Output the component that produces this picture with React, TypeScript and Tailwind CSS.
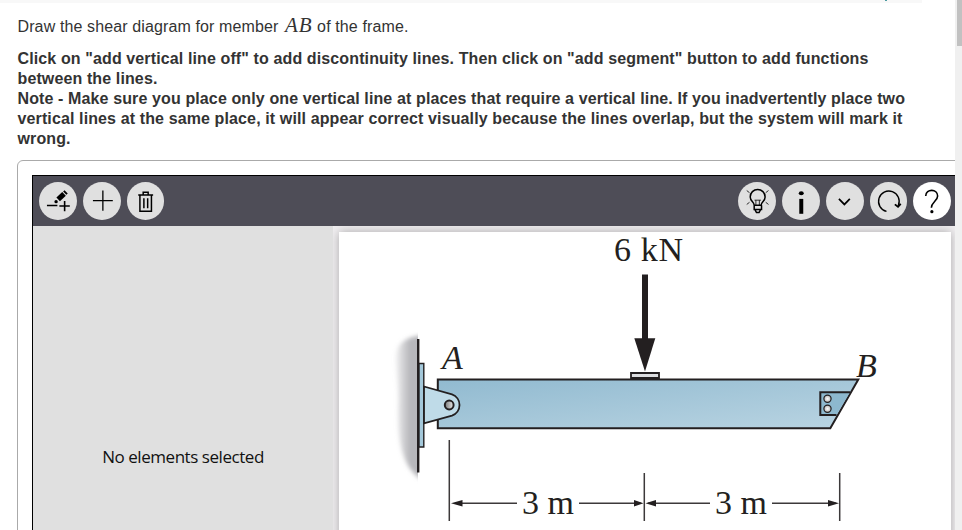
import React from 'react';

interface IRoundButtonProps {
  label: string;
  active?: boolean;
  children: React.ReactNode;
}

function RoundButton({ label, active, children }: IRoundButtonProps) {
  return (
    <button
      aria-label={label}
      className={
        active
          ? 'h-[37.75px] w-[37.75px] shrink-0 rounded-full bg-white'
          : 'h-[37.75px] w-[37.75px] shrink-0 rounded-full bg-[#e0e0e0]'
      }
    >
      <svg
        viewBox="0 0 38 38"
        className="block h-full w-full"
        fill="none"
        stroke="#000"
        strokeWidth="1.3"
      >
        {children}
      </svg>
    </button>
  );
}

function Toolbar() {
  return (
    <div className="flex h-[50px] justify-between bg-[#4e4d57] pt-[6px] pr-[4px] pl-[6px]">
      <div className="flex gap-[6px]">
        <RoundButton label="add vertical line off">
          <path d="M8 23.7h10.5M20.5 24.2h10.5M25.8 19v10.5" strokeWidth="1.6" />
          <path d="M19.3 17.6 25.2 12" strokeWidth="5.2" />
          <path d="M25.9 11.3l1.4-1.4" strokeWidth="4.6" />
          <circle cx="17.2" cy="19.8" r="1.7" fill="#000" stroke="none" />
        </RoundButton>
        <RoundButton label="add segment">
          <path d="M10 18.8h20M20 8.5v20.5" />
        </RoundButton>
        <RoundButton label="delete">
          <path
            d="M11.3 13h15M13 13v16.5h11.6V13M16.3 13v-2.6h5V13M17 16.3v10M20.8 16.3v10"
            strokeWidth="1.5"
          />
        </RoundButton>
      </div>
      <div className="flex gap-[6px]">
        <RoundButton label="hint">
          <path
            d="M16.3 23.3c0-3-4-4-4-8.3a7.5 7.5 0 0 1 15 0c0 4.3-4 5.3-4 8.3zM16.3 23.3v4.5h7.4v-4.5M17.2 28l1.4 2.7h2.6l1.4-2.7"
            strokeWidth="1.5"
          />
          <path
            d="M16.6 18.3h6.5M18 18.3v5M21.5 18.3v5M8.8 8.6l2.8 2.2M30.7 8.6l-2.8 2.2M8.8 22.6l2.8-2.2M30.7 22.6l-2.8-2.2"
            strokeWidth=".8"
          />
        </RoundButton>
        <RoundButton label="info">
          <ellipse cx="19.4" cy="11.3" rx="2.5" ry="2.1" fill="#000" stroke="none" />
          <path d="M19.4 17v15" strokeWidth="4" />
        </RoundButton>
        <RoundButton label="more">
          <path d="M13 17l5.5 5.6L24 17" strokeWidth="1.7" />
        </RoundButton>
        <RoundButton label="reset">
          <path d="M16.6 29.6A10.4 10.4 0 1 1 28.6 23.5" strokeWidth="1.4" />
          <path d="M25 22.5l3.2 2.4 2.8-2.8" strokeWidth="1.8" />
        </RoundButton>
        <RoundButton label="help" active>
          <path
            d="M12.8 14c.3-7.6 12-7.3 12 0 0 5.2-6.3 6.3-6.3 12"
            strokeWidth="1.6"
          />
          <circle cx="19" cy="29.9" r="1.6" fill="#000" stroke="none" />
        </RoundButton>
      </div>
    </div>
  );
}

function FrameDiagram() {
  return (
    <svg
      viewBox="339 232 612 298"
      className="block h-[298px] w-[612px]"
      fill="none"
      stroke="#231f20"
    >
      <defs>
        <linearGradient id="beam" x1="0" y1="0" x2="1" y2="1">
          <stop offset="0" stopColor="#91bad0" />
          <stop offset="1" stopColor="#b9d4e2" />
        </linearGradient>
        <linearGradient id="wall" x1="0" y1="0" x2="1" y2="0">
          <stop offset="0" stopColor="#b7b7bb" stopOpacity="0.2" />
          <stop offset="0.5" stopColor="#b7b7bb" />
          <stop offset="1" stopColor="#b5b5b9" />
        </linearGradient>
        <filter id="soft" x="-40%" y="-10%" width="180%" height="120%">
          <feGaussianBlur stdDeviation="2" />
        </filter>
        <clipPath id="wallSide">
          <path d="M385 320h33v165h-33z" />
        </clipPath>
        <radialGradient id="bolt">
          <stop offset="0" stopColor="#fff" />
          <stop offset="1" stopColor="#b4b4b4" />
        </radialGradient>
        <linearGradient id="pin">
          <stop offset="0" stopColor="#777" />
          <stop offset="1" stopColor="#eee" />
        </linearGradient>
      </defs>

      {/* wall and bracket */}
      <g clipPath="url(#wallSide)">
        <path
          d="M424 335c-20 2-29 9-28 27 1 17 3 29 2 48 0 24 1 57 26 71z"
          fill="url(#wall)"
          stroke="none"
          filter="url(#soft)"
        />
      </g>
      <path d="M418.2 339v133.5" strokeWidth="2.4" />
      <path d="M419 363.5h4.8v83.5H419z" fill="#a4c8da" strokeWidth="1.4" />

      {/* member */}
      <path
        d="M437.8 379.5H858.3L830.3 428.3H437.8z"
        fill="url(#beam)"
        strokeWidth="2"
      />
      <path
        d="M424 386.5l28 7.8a11.3 11.3 0 0 1 0 21.3l-28 7.7z"
        fill="#bfdbe8"
        strokeWidth="1.8"
      />
      <circle cx="449.2" cy="405" r="4.4" fill="url(#pin)" strokeWidth="2" />
      <path d="M850 392.2H820.3V415H836.5" fill="#8db8ce" strokeWidth="2" />
      <circle cx="827.5" cy="398.8" r="3.6" fill="url(#bolt)" strokeWidth="1.2" />
      <circle cx="827.5" cy="408.8" r="3.6" fill="url(#bolt)" strokeWidth="1.2" />

      {/* load */}
      <path d="M645 274.5V342" strokeWidth="6" />
      <path d="M634.3 338.3h21L645 371.5z" fill="#231f20" stroke="none" />
      <path d="M631 373h28v5h-28z" fill="#dcdde0" strokeWidth="1.8" />

      {/* dimensions */}
      <g strokeWidth="1.5" stroke="#3c393a">
        <path d="M449.3 440v81M644.3 473v48M839.7 473v48" />
        <path d="M455 503.3h62M579 503.3h62M648 503.3h62M772 503.3h64" />
      </g>
      <g fill="#231f20" stroke="none">
        <path d="M451 503.3l11.5-3.3v6.6zM643.5 503.3l-9.5-3.3v6.6zM645.5 503.3l10.5-3.3v6.6zM839 503.3l-11-3.3v6.6z" />
      </g>

      <g
        fill="#231f20"
        stroke="none"
        className="font-['Liberation_Serif',serif]"
        fontSize="34"
      >
        <text x="614" y="260.5" textLength="69">6 kN</text>
        <text x="442" y="368.5" fontStyle="italic">A</text>
        <text x="856" y="376.5" fontStyle="italic">B</text>
        <text x="522" y="514" textLength="52">3 m</text>
        <text x="715" y="514" textLength="52">3 m</text>
      </g>
    </svg>
  );
}

export default function App() {
  return (
    <div className="flex h-[530px] w-[962px] overflow-hidden bg-white font-['Liberation_Sans',Arial,sans-serif] text-[#333]">
      <main className="w-[955px] shrink-0 overflow-hidden">
        <div className="h-[3px] w-[922px] bg-[#f8f8f8] pl-[885px]">
          <div className="h-px w-[2px] bg-[#4b9aa0]" />
        </div>
        <p className="mt-[12px] ml-[17.5px] h-5 text-[16px] leading-5 tracking-[0.12px] whitespace-nowrap">
          Draw the shear diagram for member{' '}
          <span className="inline-block w-[29.5px] pl-[2px] font-['Liberation_Serif',serif] text-[21px] leading-none tracking-[0.8px] italic">
            AB
          </span>{' '}
          of the frame.
        </p>
        <div className="mt-[14px] ml-[17.5px] text-[16px] leading-5 font-bold tracking-[0.12px] whitespace-nowrap">
          <p>
            Click on "add vertical line off" to add discontinuity lines. Then
            click on "add segment" button to add functions
          </p>
          <p>between the lines.</p>
          <p>
            Note - Make sure you place only one vertical line at places that
            require a vertical line. If you inadvertently place two
          </p>
          <p>
            vertical lines at the same place, it will appear correct visually
            because the lines overlap, but the system will mark it
          </p>
          <p>wrong.</p>
        </div>

        <section className="mt-[11px] ml-[17px] h-[380px] w-[960px] rounded-tl-[6px] border border-[#aaa] pt-[14px] pl-[14px]">
          <div className="h-[366px] w-[923px] border-t border-l border-black">
            <Toolbar />
            <div className="flex h-[316px]">
              <aside className="w-[300px] shrink-0 bg-[#e0e0e0] pt-[219px] text-center font-['Open_Sans','Noto_Sans',sans-serif] text-[17px] leading-6 tracking-[-0.45px] text-[#111]">
                No elements selected
              </aside>
              <div className="w-[622px] overflow-hidden bg-[#f1eff1] pt-[6px] pl-[6px]">
                <div className="h-[320px] w-[612px] bg-white shadow-[0_0_10px_rgba(0,0,0,0.3)]">
                  <FrameDiagram />
                </div>
              </div>
            </div>
          </div>
        </section>
      </main>
      <div className="h-full w-[7px] bg-[#f0f0f0] pl-[2px]">
        <div className="h-[46px] w-[5px] bg-[#c1c1c1]" />
      </div>
    </div>
  );
}
